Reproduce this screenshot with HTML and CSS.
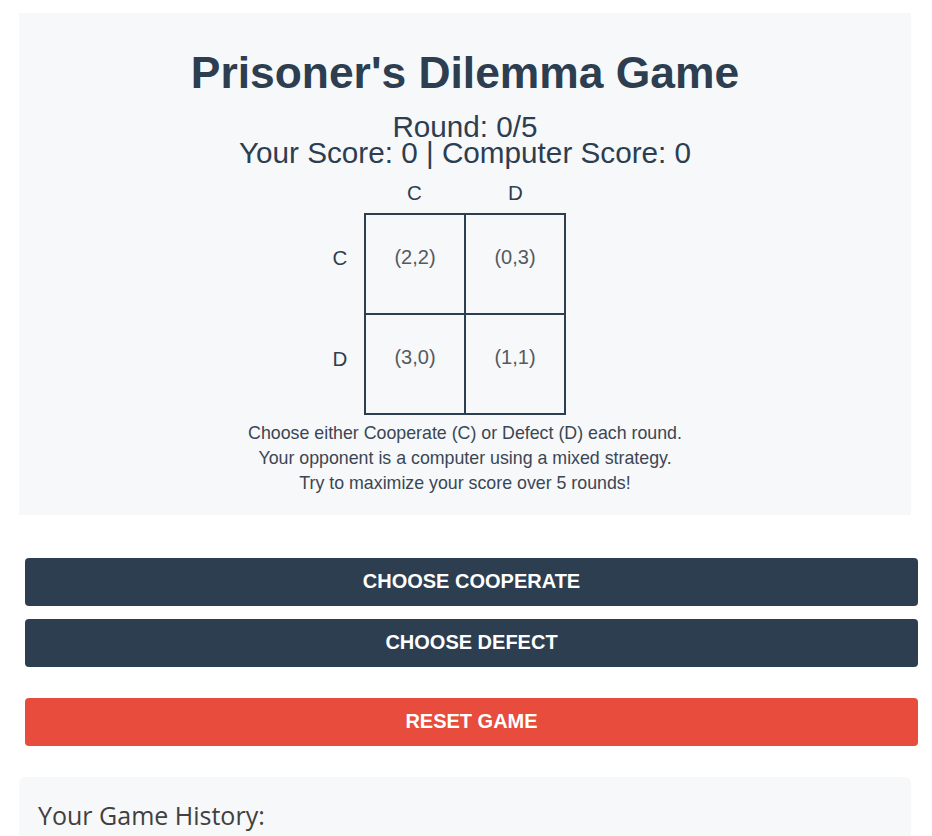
FILE: index.html
```html
<!DOCTYPE html>
<html lang="en">
<head>
<meta charset="utf-8">
<title>Prisoner's Dilemma Game</title>
<link rel="stylesheet" href="styles.css">
</head>
<body>
<div class="page">
  <section class="board">
    <h1 class="title">Prisoner's Dilemma Game</h1>
    <div class="status">Round: 0/5</div>
    <div class="status">Your Score: 0 | Computer Score: 0</div>
    <div class="matrix">
      <div class="corner"></div>
      <div class="col-label">C</div>
      <div class="col-label">D</div>
      <div class="row-label">C</div>
      <div class="grid">
        <div class="cell">(2,2)</div>
        <div class="cell">(0,3)</div>
        <div class="cell">(3,0)</div>
        <div class="cell">(1,1)</div>
      </div>
      <div class="row-label second">D</div>
    </div>
    <p class="info">Choose either Cooperate (C) or Defect (D) each round.<br>Your opponent is a computer using a mixed strategy.<br>Try to maximize your score over 5 rounds!</p>
  </section>
  <div class="actions">
    <button class="btn btn-dark">Choose Cooperate</button>
    <button class="btn btn-dark">Choose Defect</button>
    <button class="btn btn-red">Reset Game</button>
  </div>
  <section class="history">
    <h3 class="history-title">Your Game History:</h3>
  </section>
</div>
</body>
</html>
```
FILE: styles.css
```css
* { box-sizing: border-box; }
html, body { margin: 0; padding: 0; background: #ffffff; }
body { font-family: "Liberation Sans", Arial, sans-serif; color: #2c3e50; }

.page {
  padding: 13px 21px 0 19px;
}

.board {
  background: #f7f8fa;
  height: 502px;
  padding-top: 35px;
  display: flex;
  flex-direction: column;
  align-items: center;
}

.title {
  margin: 0;
  font-size: 44.4px;
  line-height: 50px;
  font-weight: bold;
  color: #2c3e50;
}

.status {
  font-size: 29.7px;
  line-height: 26px;
  color: #2c3e50;
}
.title + .status { margin-top: 16px; }

.matrix {
  margin-top: 15px;
  display: grid;
  grid-template-columns: 40px 101px 101px;
  grid-template-rows: 24px 8px 101px 101px;
  margin-left: -40px;
}
.corner { grid-column: 1; grid-row: 1; }
.col-label {
  grid-row: 1;
  font-size: 20.5px;
  line-height: 24px;
  text-align: center;
  color: #2c3e50;
}
.row-label {
  grid-column: 1;
  grid-row: 3;
  font-size: 20.5px;
  display: flex;
  align-items: center;
  justify-content: center;
  padding-right: 8px;
  padding-bottom: 12px;
  color: #2c3e50;
}
.row-label.second { grid-row: 4; }

.grid {
  grid-column: 2 / 4;
  grid-row: 3 / 5;
  width: 202px;
  height: 202px;
  display: grid;
  grid-template-columns: 100px 100px;
  grid-template-rows: 100px 100px;
  border-top: 2px solid #2c3e50;
  border-left: 2px solid #2c3e50;
}
.cell {
  border-right: 2px solid #2c3e50;
  border-bottom: 2px solid #2c3e50;
  display: flex;
  align-items: center;
  justify-content: center;
  font-size: 20px;
  color: #555a60;
  padding-bottom: 14px;
}

.info {
  margin: 6px 0 0;
  font-size: 17.8px;
  line-height: 25px;
  text-align: center;
  color: #3a4654;
}

.actions {
  margin: 43px -7px 0 6px;
  display: flex;
  flex-direction: column;
}
.btn {
  height: 48px;
  border: none;
  border-radius: 4px;
  font-family: "Liberation Sans", Arial, sans-serif;
  font-size: 20px;
  font-weight: bold;
  text-transform: uppercase;
  color: #ffffff;
  cursor: pointer;
  padding: 0 0 2px;
}
.btn-dark { background: #2c3e50; }
.btn-dark + .btn-dark { margin-top: 13px; }
.btn-red { background: #e74c3c; margin-top: 31px; }

.history {
  margin-top: 31px;
  background: #f7f8fa;
  border-radius: 6px;
  padding: 21px 19px 40px;
  min-height: 120px;
}
.history-title {
  margin: 0;
  font-family: "Open Sans", sans-serif;
  font-weight: normal;
  font-size: 25px;
  line-height: 34px;
  color: #404040;
}
```
